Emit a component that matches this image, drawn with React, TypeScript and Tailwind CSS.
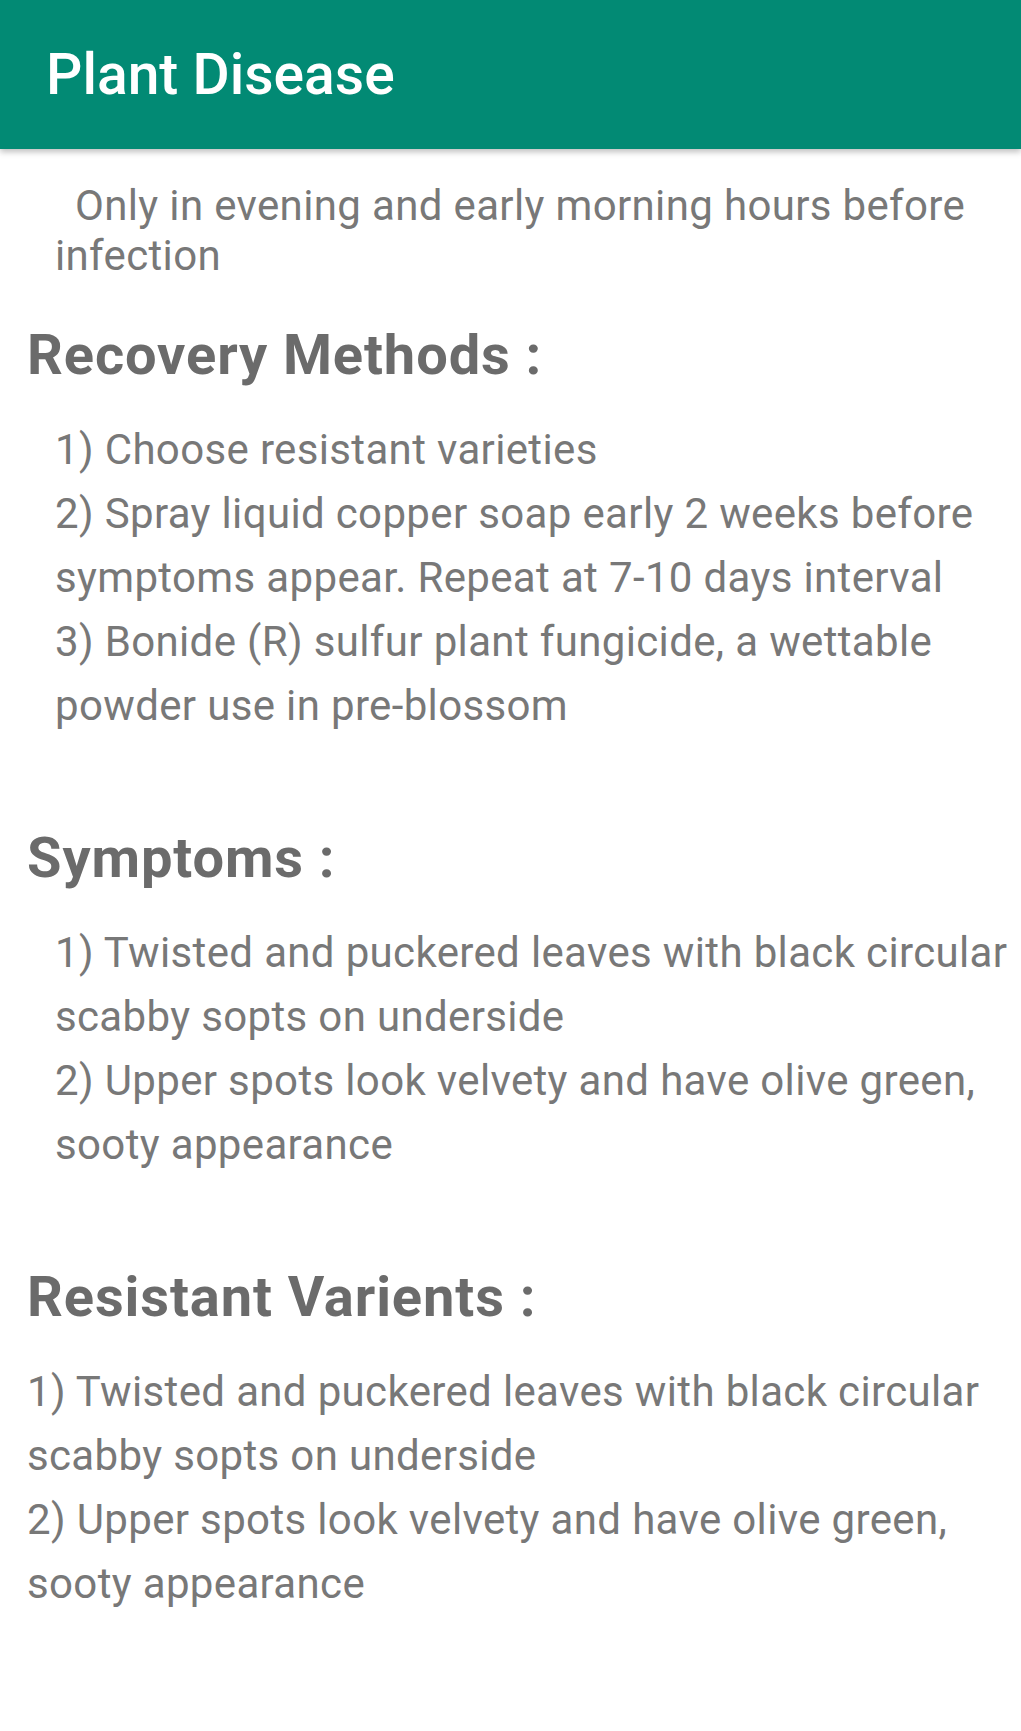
import React from 'react';

interface Section {
  title: string;
  lines: string[];
  inset?: boolean;
}

const sections: Section[] = [
  {
    title: 'Recovery Methods :',
    inset: true,
    lines: [
      '1) Choose resistant varieties',
      '2) Spray liquid copper soap early 2 weeks before',
      'symptoms appear. Repeat at 7-10 days interval',
      '3) Bonide (R) sulfur plant fungicide, a wettable',
      'powder use in pre-blossom',
    ],
  },
  {
    title: 'Symptoms :',
    inset: true,
    lines: [
      '1) Twisted and puckered leaves with black circular',
      'scabby sopts on underside',
      '2) Upper spots look velvety and have olive green,',
      'sooty appearance',
    ],
  },
  {
    title: 'Resistant Varients :',
    lines: [
      '1) Twisted and puckered leaves with black circular',
      'scabby sopts on underside',
      '2) Upper spots look velvety and have olive green,',
      'sooty appearance',
    ],
  },
];

const App: React.FC = () => {
  return (
    <div className="w-[1021px] min-h-[1731px] bg-white font-['Roboto',sans-serif]">
      <header className="h-[149px] bg-[#028a74] flex items-center pl-[46px] shadow-[0_3px_6px_rgba(0,0,0,0.25)]">
        <h1 className="text-[57px] font-medium text-white leading-none">Plant Disease</h1>
      </header>

      <main className="pl-[27px] pr-2 pt-[32px] pb-20">
        <p className="pl-[28px] indent-[20px] text-[42px] leading-[50px] tracking-[0.35px] text-[#787878] whitespace-nowrap">
          Only in evening and early morning hours before
          <br />
          infection
        </p>

        {sections.map((section, i) => (
          <section key={section.title} className={i === 0 ? 'mt-[41px]' : 'mt-[87px]'}>
            <h2 className="text-[56px] leading-[66px] font-bold tracking-[0.9px] text-[#6b6b6b]">{section.title}</h2>
            <ul className={`mt-[30px] ${section.inset ? 'pl-[28px]' : ''}`}>
              {section.lines.map((line, j) => (
                <li key={j} className="text-[42px] leading-[64px] tracking-[0.35px] text-[#787878] whitespace-nowrap">
                  {line}
                </li>
              ))}
            </ul>
          </section>
        ))}
      </main>
    </div>
  );
};

export default App;
